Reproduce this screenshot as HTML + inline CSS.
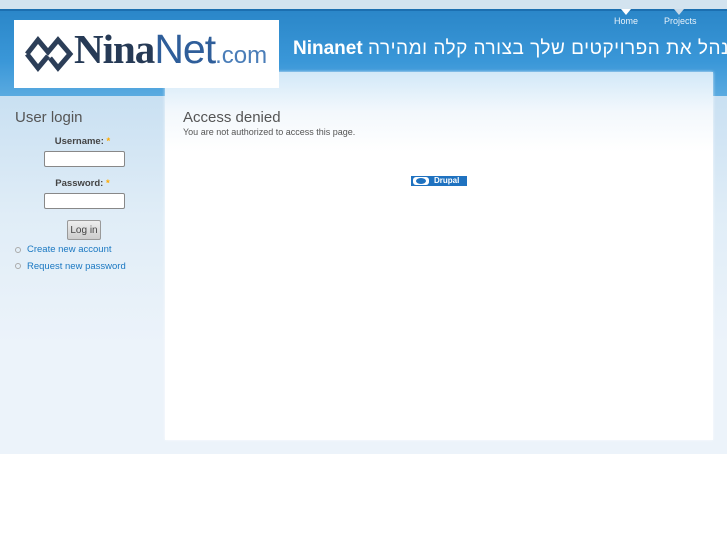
<!DOCTYPE html>
<html><head><meta charset="utf-8"><style>
*{margin:0;padding:0;box-sizing:border-box}
body{width:727px;height:545px;overflow:hidden;background:#fff;font-family:"Liberation Sans","DejaVu Sans",sans-serif;position:relative}
.a{position:absolute}
</style></head><body>
<div class="a" style="left:0;top:0;width:727px;height:9px;background:#d3e3ef"></div>
<div class="a" style="left:0;top:9px;width:727px;height:87px;background:linear-gradient(#2a86c8,#3a97d8 60%,#5aaae0)"></div>
<div class="a" style="left:0;top:9px;width:727px;height:2px;background:#1c6fb0"></div>
<div class="a" style="left:0;top:96px;width:727px;height:358px;background:linear-gradient(#c9e0f2,#e0edf7 120px,#ecf3fa 250px)"></div>
<div class="a" style="left:165px;top:72px;width:548px;height:368px;background:linear-gradient(#d2e8f8,#e6f2fb 24px,#f3f8fc 40px,#fff 80px);box-shadow:0 0 3px rgba(255,255,255,.8)"></div>
<div class="a" style="left:621px;top:9px;width:0;height:0;border-left:5px solid transparent;border-right:5px solid transparent;border-top:6px solid #fff"></div>
<div class="a" style="left:674px;top:9px;width:0;height:0;border-left:5px solid transparent;border-right:5px solid transparent;border-top:6px solid #c9d9e8"></div>
<div class="a" style="left:614px;top:16px;color:#e8f2fa;font-size:9px">Home</div>
<div class="a" style="left:664px;top:16px;color:#e8f2fa;font-size:9px">Projects</div>
<div class="a" style="left:14px;top:20px;width:265px;height:68px;background:#fff"></div>
<svg class="a" style="left:24px;top:34px" width="50" height="40" viewBox="0 0 50 40"><path d="M3 20 L14 6 L24 18 L34 6 L46 20 L34 34 L26 24" fill="none" stroke="#2c3e58" stroke-width="5"/><path d="M24 22 L14 34 L3 20" fill="none" stroke="#2c3e58" stroke-width="5"/></svg>
<div class="a" style="left:74px;top:25px;font-family:'Liberation Serif',serif;font-weight:bold;font-size:41px;color:#263a56;letter-spacing:-1px;white-space:nowrap">Nina<span style="font-family:'Liberation Sans',sans-serif;font-weight:normal;color:#2f5e9a">Net</span><span style="font-family:'Liberation Sans',sans-serif;font-weight:normal;font-size:24px;color:#4a7db8;letter-spacing:0">.com</span></div>
<div class="a" dir="ltr" style="left:293px;top:38px;white-space:nowrap;color:#fff;font-size:19px;font-family:'Liberation Sans','DejaVu Sans',sans-serif"><b>Ninanet</b> <span style="letter-spacing:0.5px">מנהל את הפרויקטים שלך בצורה קלה ומהירה</span></div>
<div class="a" style="left:15px;top:109px;font-size:15px;color:#555">User login</div>
<div class="a" style="left:0;top:136px;width:165px;text-align:center;font-size:9.5px;font-weight:bold;color:#444">Username: <span style="color:#fa0">*</span></div>
<div class="a" style="left:44px;top:151px;width:81px;height:16px;background:#fff;border:1px solid #888;border-radius:2px"></div>
<div class="a" style="left:0;top:178px;width:165px;text-align:center;font-size:9.5px;font-weight:bold;color:#444">Password: <span style="color:#fa0">*</span></div>
<div class="a" style="left:44px;top:193px;width:81px;height:16px;background:#fff;border:1px solid #888;border-radius:2px"></div>
<div class="a" style="left:67px;top:220px;width:34px;height:20px;background:linear-gradient(#eee,#ccc);border:1px solid #999;border-radius:2px;font-size:10px;color:#444;text-align:center;line-height:19px">Log in</div>
<div class="a" style="left:15px;top:247px;width:6px;height:6px;border:1px solid #aaa;border-radius:50%"></div>
<div class="a" style="left:27px;top:244px;font-size:9.5px;color:#1a78c2">Create new account</div>
<div class="a" style="left:15px;top:263px;width:6px;height:6px;border:1px solid #aaa;border-radius:50%"></div>
<div class="a" style="left:27px;top:261px;font-size:9.5px;color:#1a78c2">Request new password</div>
<div class="a" style="left:183px;top:109px;font-size:15px;color:#555">Access denied</div>
<div class="a" style="left:183px;top:127px;font-size:9px;color:#555">You are not authorized to access this page.</div>
<div class="a" style="left:411px;top:176px;width:56px;height:10px;background:#1f72c0"></div>
<div class="a" style="left:413px;top:177px;width:16px;height:8px;background:#fff;border-radius:3px"></div>
<div class="a" style="left:416px;top:178px;width:10px;height:6px;background:#1f72c0;border-radius:50%"></div>
<div class="a" style="left:434px;top:176px;font-size:8px;font-weight:bold;color:#fff;line-height:10px">Drupal</div>
</body></html>
